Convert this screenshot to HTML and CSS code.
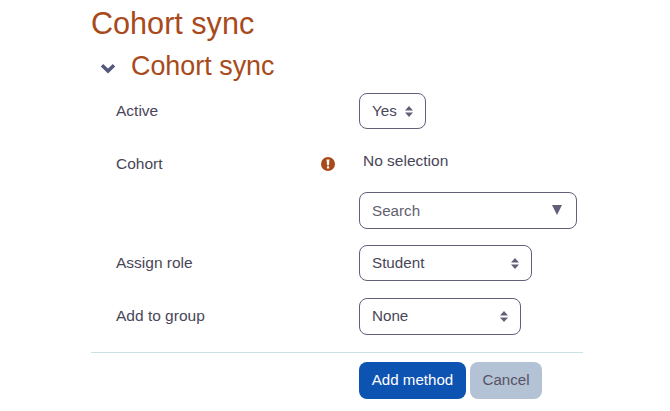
FILE: index.html
```
<!DOCTYPE html>
<html lang="en">
<head>
<meta charset="utf-8">
<title>Cohort sync</title>
<link rel="stylesheet" href="styles.css">
</head>
<body>
<main class="page">
  <h1 class="title">Cohort sync</h1>
  <div class="section-head">
    <svg class="chevron" viewBox="0 0 16 11"><path d="M2 2.3 8 8.1 14 2.3" fill="none" stroke="currentColor" stroke-width="3.5"/></svg>
    <h2 class="section-title">Cohort sync</h2>
  </div>
  <form class="form">
    <div class="row row-active">
      <span class="label">Active</span>
      <div class="select select-yes"><span>Yes</span><svg class="sort" viewBox="0 0 8 11"><path d="M4 0 8 4.6H0zM4 11 0 6.4H8z"/></svg></div>
    </div>
    <div class="row row-cohort">
      <div class="label label-required"><span>Cohort</span>
        <svg class="required" viewBox="0 0 14 14"><circle cx="7" cy="7" r="7" fill="#a84a1b"/><path d="M5.6 2.4h2.8L8 8.2H6zM6 9.3h2.1v2.1H6z" fill="#fff"/></svg>
      </div>
      <div class="cohort-field">
        <div class="selection">No selection</div>
        <div class="select select-search"><span class="placeholder">Search</span><svg class="down" viewBox="0 0 10 10"><path d="M0 0H10L5 10z"/></svg></div>
      </div>
    </div>
    <div class="row row-role">
      <span class="label">Assign role</span>
      <div class="select select-role"><span>Student</span><svg class="sort" viewBox="0 0 8 11"><path d="M4 0 8 4.6H0zM4 11 0 6.4H8z"/></svg></div>
    </div>
    <div class="row row-group">
      <span class="label">Add to group</span>
      <div class="select select-group"><span>None</span><svg class="sort" viewBox="0 0 8 11"><path d="M4 0 8 4.6H0zM4 11 0 6.4H8z"/></svg></div>
    </div>
    <div class="actions">
      <button type="button" class="button primary">Add method</button>
      <button type="button" class="button secondary">Cancel</button>
    </div>
  </form>
</main>
</body>
</html>
```
FILE: styles.css
```
* { box-sizing: border-box; }
body {
  margin: 0;
  background: #fff;
  color: #494658;
  font: 15.5px/20px "Liberation Sans", Arial, sans-serif;
}
.page { width: 492px; margin-left: 91px; padding-top: 4px; }
.title, .section-title { margin: 0; color: #a84a1b; font-weight: 400; white-space: nowrap; }
.title { font-size: 30.6px; line-height: 38px; }
.section-head { display: flex; align-items: center; height: 48px; padding-left: 9px; }
.section-title { margin-left: 15px; font-size: 26.9px; line-height: 32px; }
.chevron { width: 16px; height: 11px; margin-top: 5px; color: #54597d; }
.form { margin-top: 3px; }
.row { display: grid; grid-template-columns: 243px 1fr; padding-left: 25px; align-items: start; }
.label { padding-top: 8px; }
.label-required { display: flex; justify-content: space-between; padding-right: 24px; }
.required { width: 14px; height: 14px; margin-top: 3px; }
.row-active { height: 53px; }
.row-cohort { height: 99px; }
.row-role { height: 53px; }
.row-group { height: 54px; }
.select {
  display: flex;
  align-items: center;
  justify-content: space-between;
  height: 36px;
  padding: 0 12px;
  border: 1px solid #625f78;
  border-radius: 8px;
  font-size: 15.2px;
}
.select-yes { width: 67px; }
.select-search { width: 218px; height: 37px; margin-top: 21px; padding-right: 14px; }
.select-role { width: 173px; }
.select-group { width: 162px; height: 37px; padding-bottom: 1px; }
.sort { width: 8px; height: 11px; fill: #625f78; }
.down { width: 10px; height: 10px; margin-top: -2px; fill: #625f78; }
.placeholder { color: #625f70; }
.selection { padding: 5px 0 0 4px; }
.actions { display: flex; gap: 4px; padding: 9px 0 0 268px; border-top: 1px solid #cce0e8; }
.button {
  height: 37px;
  padding: 0 0 2px;
  border: 0;
  border-radius: 8px;
  font: inherit;
  font-size: 15.1px;
}
.primary { width: 107px; background: #0d53b2; color: #fff; }
.secondary { width: 72px; background: #b3c2d4; color: #595267; }
```
